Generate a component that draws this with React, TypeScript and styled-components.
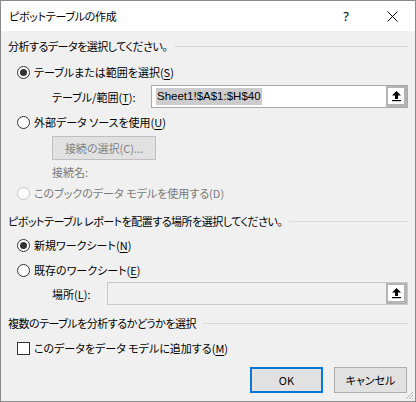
import React from "react";
import styled, { createGlobalStyle } from "styled-components";

const Global = createGlobalStyle`
  html, body { margin: 0; padding: 0; background: #ffffff; }
  * { box-sizing: border-box; }
`;

const FONT = `"Noto Sans CJK JP", "Noto Sans", sans-serif`;

const Window = styled.div`
  position: relative;
  width: 416px;
  height: 402px;
  border: 1px solid #8a8a8a;
  background: #f0f0f0;
  font-family: ${FONT};
  font-size: 11px;
  font-feature-settings: "palt";
  color: #000;
  display: flex;
  flex-direction: column;
  overflow: hidden;
`;

const TitleBar = styled.div`
  height: 30px;
  background: #ffffff;
  display: flex;
  align-items: center;
  padding-left: 8px;
  flex: none;
`;

const TitleText = styled.div`
  flex: 1;
  font-size: 11px;
  letter-spacing: -0.3px;
`;

const TitleBtn = styled.div<{ $w: number }>`
  width: ${(p) => p.$w}px;
  height: 30px;
  display: flex;
  align-items: center;
  justify-content: center;
  font-family: "Noto Sans", sans-serif;
  font-size: 13px;
`;

const Body = styled.div`
  display: flex;
  flex-direction: column;
  padding: 0 7px 0 7px;
`;

const Row = styled.div<{ $mt: number; $h?: number; $indent?: number }>`
  margin-top: ${(p) => p.$mt}px;
  height: ${(p) => p.$h ?? 20}px;
  padding-left: ${(p) => p.$indent ?? 0}px;
  display: flex;
  align-items: center;
  white-space: nowrap;
  flex: none;
`;

const SectionTitle = styled.span`
  flex: none;
  letter-spacing: -0.5px;
`;

const Rule = styled.div`
  flex: 1;
  height: 1px;
  background: #d9d9d9;
  margin-left: 7px;
`;

const Radio = styled.span<{ $checked?: boolean; $disabled?: boolean }>`
  position: relative;
  width: 13px;
  height: 13px;
  border-radius: 50%;
  border: 1px solid ${(p) => (p.$disabled ? "#c4c4c4" : "#333333")};
  background: #ffffff;
  flex: none;
  margin-left: 9px;
  margin-right: 4px;
  &::after {
    content: "";
    display: ${(p) => (p.$checked ? "block" : "none")};
    position: absolute;
    left: 2px;
    top: 2px;
    width: 7px;
    height: 7px;
    border-radius: 50%;
    background: #333333;
  }
`;

const Check = styled.span`
  width: 13px;
  height: 13px;
  border: 1px solid #333333;
  background: #ffffff;
  flex: none;
  margin-left: 9px;
  margin-right: 4px;
`;

const Label = styled.span<{ $disabled?: boolean; $w?: number }>`
  color: ${(p) => (p.$disabled ? "#7a7a7a" : "#000")};
  ${(p) => (p.$w ? `width: ${p.$w}px; flex: none;` : "")}
`;

const Key = styled.span`
  text-decoration: underline;
  text-underline-offset: 2px;
`;

const RefBox = styled.div<{ $disabled?: boolean }>`
  flex: 1;
  height: 23px;
  border: 1px solid ${(p) => (p.$disabled ? "#c9c9c9" : "#a9a9a9")};
  background: ${(p) => (p.$disabled ? "#f0f0f0" : "#ffffff")};
  display: flex;
  align-items: center;
  padding-left: 4px;
`;

const RefText = styled.div`
  flex: 1;
  display: flex;
  align-items: center;
`;

const Selected = styled.span`
  background: #cccccc;
  font-family: "Liberation Sans", Arial, sans-serif;
  font-feature-settings: normal;
  font-size: 11.5px;
  line-height: 17px;
  padding: 0 1px;
`;

const RefButton = styled.div`
  width: 21px;
  height: 21px;
  background: #b3b3b3;
  padding: 2px 3px 3px 2px;
  flex: none;
`;

const RefInner = styled.div`
  width: 100%;
  height: 100%;
  background: #ffffff;
  display: flex;
  align-items: center;
  justify-content: center;
`;

const PushButton = styled.div<{ $w: number; $default?: boolean; $disabled?: boolean }>`
  width: ${(p) => p.$w}px;
  height: ${(p) => (p.$disabled ? 24 : 26)}px;
  background: #e1e1e1;
  border: ${(p) =>
    p.$default ? "2px solid #0078d7" : p.$disabled ? "1px solid #bfbfbf" : "1px solid #adadad"};
  color: ${(p) => (p.$disabled ? "#838383" : "#000")};
  display: flex;
  align-items: center;
  justify-content: center;
  flex: none;
`;

const ButtonBar = styled.div`
  margin-top: 9px;
  display: flex;
  justify-content: flex-end;
  gap: 11px;
  padding-right: 1px;
  flex: none;
`;

const Grip = styled.svg`
  position: absolute;
  right: 1px;
  bottom: 1px;
`;

const UpArrow = () => (
  <svg width="11" height="12" viewBox="0 0 11 12">
    <path d="M5.5 1 L10 5.5 L7 5.5 L7 9 L4 9 L4 5.5 L1 5.5 Z" fill="#000" />
    <rect x="1" y="10" width="9" height="1.2" fill="#000" />
  </svg>
);

export default function App() {
  return (
    <>
      <Global />
      <Window>
        <TitleBar>
          <TitleText>ピボットテーブルの作成</TitleText>
          <TitleBtn $w={46}>?</TitleBtn>
          <TitleBtn $w={46}>
            <svg width="11" height="11" viewBox="0 0 11 11">
              <path d="M0.5 0.5 L10.5 10.5 M10.5 0.5 L0.5 10.5" stroke="#000" strokeWidth="1" />
            </svg>
          </TitleBtn>
        </TitleBar>
        <Body>
          <Row $mt={5}>
            <SectionTitle>分析するデータを選択してください。</SectionTitle>
            <Rule />
          </Row>
          <Row $mt={6}>
            <Radio $checked />
            <Label>
              テーブルまたは範囲を選択(<Key>S</Key>)
            </Label>
          </Row>
          <Row $mt={3} $h={23} $indent={44}>
            <Label $w={99}>
              テーブル/範囲(<Key>T</Key>):
            </Label>
            <RefBox>
              <RefText>
                <Selected>Sheet1!$A$1:$H$40</Selected>
              </RefText>
              <RefButton>
                <RefInner>
                  <UpArrow />
                </RefInner>
              </RefButton>
            </RefBox>
          </Row>
          <Row $mt={4}>
            <Radio />
            <Label>
              外部データ ソースを使用(<Key>U</Key>)
            </Label>
          </Row>
          <Row $mt={4} $h={24} $indent={44}>
            <PushButton $w={104} $disabled>
              接続の選択(C)...
            </PushButton>
          </Row>
          <Row $mt={2} $indent={44}>
            <Label $disabled>接続名:</Label>
          </Row>
          <Row $mt={1}>
            <Radio $disabled />
            <Label $disabled>このブックのデータ モデルを使用する(D)</Label>
          </Row>
          <Row $mt={8}>
            <SectionTitle>ピボットテーブル レポートを配置する場所を選択してください。</SectionTitle>
            <Rule />
          </Row>
          <Row $mt={4}>
            <Radio $checked />
            <Label>
              新規ワークシート(<Key>N</Key>)
            </Label>
          </Row>
          <Row $mt={5}>
            <Radio />
            <Label>
              既存のワークシート(<Key>E</Key>)
            </Label>
          </Row>
          <Row $mt={2} $h={23} $indent={44}>
            <Label $w={55}>
              場所(<Key>L</Key>):
            </Label>
            <RefBox $disabled>
              <RefText />
              <RefButton>
                <RefInner>
                  <UpArrow />
                </RefInner>
              </RefButton>
            </RefBox>
          </Row>
          <Row $mt={8}>
            <SectionTitle>複数のテーブルを分析するかどうかを選択</SectionTitle>
            <Rule />
          </Row>
          <Row $mt={5}>
            <Check />
            <Label>
              このデータをデータ モデルに追加する(<Key>M</Key>)
            </Label>
          </Row>
          <ButtonBar>
            <PushButton $w={73} $default>
              OK
            </PushButton>
            <PushButton $w={73}>キャンセル</PushButton>
          </ButtonBar>
        </Body>
        <Grip width="10" height="10" viewBox="0 0 10 10">
          <path d="M9 2 L2 9 M9 5 L5 9 M9 8 L8 9" stroke="#b5b5b5" strokeWidth="1" />
        </Grip>
      </Window>
    </>
  );
}
